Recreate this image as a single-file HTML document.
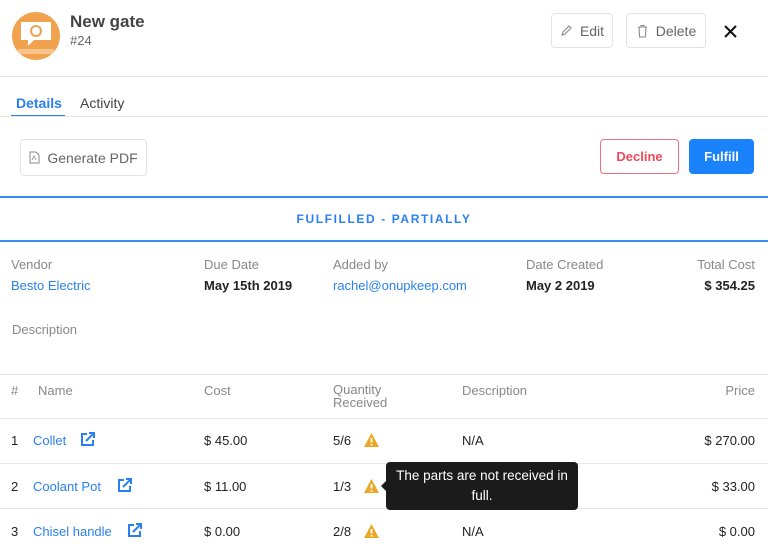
<!DOCTYPE html>
<html><head><meta charset="utf-8"><style>
*{margin:0;padding:0;box-sizing:border-box}
body{width:768px;height:550px;overflow:hidden;background:#fff;font-family:"Liberation Sans",sans-serif;position:relative;color:#222}
.a{position:absolute;white-space:nowrap}
.btn{position:absolute;border:1px solid #e3e3e3;border-radius:4px;background:#fff;color:#666;font-size:14px;display:flex;align-items:center;justify-content:center;gap:7px}
.hl{position:absolute;left:0;width:768px;height:1px;background:#e6e6e6}
.lbl{font-size:13px;color:#888}
.val{font-size:13px;color:#222}
.blue{color:#2a80f0}
.warn{position:absolute;width:17px;height:16px}
</style></head><body>
<div class="a" style="left:12px;top:12px;width:48px;height:48px;border-radius:50%;background:#f0a24e;overflow:hidden">
<svg width="48" height="48" viewBox="0 0 48 48"><path d="M9 10h30v18H22l-6 6v-6H9z" fill="#fff"/><circle cx="24" cy="19" r="5" fill="none" stroke="#f0a24e" stroke-width="2"/><rect x="6" y="37" width="36" height="5" fill="#f6c48c"/></svg></div>
<div class="a" style="left:70px;top:12px;font-size:17px;font-weight:bold;color:#444">New gate</div>
<div class="a" style="left:70px;top:33px;font-size:13px;color:#666">#24</div>
<div class="btn" style="left:551px;top:13px;width:62px;height:35px"><svg width="13" height="13" viewBox="0 0 13 13"><path d="M2 11l1-3 6-6 2 2-6 6z" fill="none" stroke="#888" stroke-width="1.1"/></svg>Edit</div>
<div class="btn" style="left:626px;top:13px;width:80px;height:35px"><svg width="13" height="14" viewBox="0 0 13 14"><path d="M2 3h9M5 3V1.5h3V3M3 3l.6 10h5.8L10 3" fill="none" stroke="#888" stroke-width="1.1"/></svg>Delete</div>
<svg class="a" style="left:724px;top:25px" width="13" height="13" viewBox="0 0 13 13"><path d="M1 1l11 11M12 1L1 12" stroke="#111" stroke-width="2"/></svg>
<div class="hl" style="top:76px"></div>
<div class="a blue" style="left:16px;top:95px;font-size:14px;font-weight:bold">Details</div>
<div class="a" style="left:80px;top:95px;font-size:14px;color:#444">Activity</div>
<div class="a" style="left:11px;top:115px;width:54px;height:2px;background:#2a80f0"></div>
<div class="hl" style="top:116px"></div>
<div class="btn" style="left:20px;top:139px;width:127px;height:37px"><svg width="11" height="13" viewBox="0 0 11 13"><path d="M1 1h6l3 3v8H1z" fill="none" stroke="#888"/><path d="M3 9l2-4 2 4" fill="none" stroke="#888" stroke-width=".8"/></svg>Generate PDF</div>
<div class="btn" style="left:600px;top:139px;width:79px;height:35px;border-color:#f07080;color:#f04858;font-weight:bold;font-size:13px">Decline</div>
<div class="btn" style="left:689px;top:139px;width:65px;height:35px;border-color:#1a82fb;background:#1a82fb;color:#fff;font-weight:bold;font-size:13px">Fulfill</div>
<div class="a" style="left:0;top:196px;width:768px;height:2px;background:#3a8af0"></div>
<div class="a" style="left:0;top:212px;width:768px;text-align:center;font-size:12px;font-weight:bold;letter-spacing:1.6px;color:#2a80f0">FULFILLED - PARTIALLY</div>
<div class="a" style="left:0;top:240px;width:768px;height:2px;background:#3a8af0"></div>
<div class="a lbl" style="left:11px;top:257px">Vendor</div>
<div class="a lbl" style="left:204px;top:257px">Due Date</div>
<div class="a lbl" style="left:333px;top:257px">Added by</div>
<div class="a lbl" style="left:526px;top:257px">Date Created</div>
<div class="a lbl" style="right:13px;top:257px">Total Cost</div>
<div class="a val blue" style="left:11px;top:278px">Besto Electric</div>
<div class="a val" style="left:204px;top:278px;font-weight:bold;color:#222">May 15th 2019</div>
<div class="a val blue" style="left:333px;top:278px">rachel@onupkeep.com</div>
<div class="a val" style="left:526px;top:278px;font-weight:bold">May 2 2019</div>
<div class="a val" style="right:13px;top:278px;font-weight:bold">$ 354.25</div>
<div class="a lbl" style="left:12px;top:322px">Description</div>
<div class="hl" style="top:374px"></div>
<div class="a lbl" style="left:11px;top:383px">#</div>
<div class="a lbl" style="left:38px;top:383px">Name</div>
<div class="a lbl" style="left:204px;top:383px">Cost</div>
<div class="a lbl" style="left:333px;top:383px;line-height:13px">Quantity<br>Received</div>
<div class="a lbl" style="left:462px;top:383px">Description</div>
<div class="a lbl" style="right:13px;top:383px">Price</div>
<div class="hl" style="top:418px"></div>
<div class="hl" style="top:463px"></div>
<div class="hl" style="top:508px"></div>
<div class="a val" style="left:11px;top:433px">1</div>
<div class="a val blue" style="left:33px;top:433px">Collet</div>
<div class="a val" style="left:204px;top:433px">$ 45.00</div>
<div class="a val" style="left:333px;top:433px">5/6</div>
<div class="a val" style="left:462px;top:433px">N/A</div>
<div class="a val" style="right:13px;top:433px">$ 270.00</div>
<div class="a val" style="left:11px;top:479px">2</div>
<div class="a val blue" style="left:33px;top:479px">Coolant Pot</div>
<div class="a val" style="left:204px;top:479px">$ 11.00</div>
<div class="a val" style="left:333px;top:479px">1/3</div>
<div class="a val" style="right:13px;top:479px">$ 33.00</div>
<div class="a val" style="left:11px;top:524px">3</div>
<div class="a val blue" style="left:33px;top:524px">Chisel handle</div>
<div class="a val" style="left:204px;top:524px">$ 0.00</div>
<div class="a val" style="left:333px;top:524px">2/8</div>
<div class="a val" style="left:462px;top:524px">N/A</div>
<div class="a val" style="right:13px;top:524px">$ 0.00</div>
<svg class="a" style="left:80px;top:432px" width="15" height="15" viewBox="0 0 15 15"><path d="M7 2H2v11h11V8" fill="none" stroke="#2a80f0" stroke-width="2"/><path d="M6 9l7-7M9 1h5v5" fill="none" stroke="#2a80f0" stroke-width="2"/></svg>
<svg class="a" style="left:117px;top:478px" width="15" height="15" viewBox="0 0 15 15"><path d="M7 2H2v11h11V8" fill="none" stroke="#2a80f0" stroke-width="2"/><path d="M6 9l7-7M9 1h5v5" fill="none" stroke="#2a80f0" stroke-width="2"/></svg>
<svg class="a" style="left:127px;top:523px" width="15" height="15" viewBox="0 0 15 15"><path d="M7 2H2v11h11V8" fill="none" stroke="#2a80f0" stroke-width="2"/><path d="M6 9l7-7M9 1h5v5" fill="none" stroke="#2a80f0" stroke-width="2"/></svg>
<svg class="warn" style="left:363px;top:432px" viewBox="0 0 17 16"><path d="M8.5 1L16 15H1z" fill="#e9a825"/><path d="M8.5 6v4.5M8.5 12v1.5" stroke="#fff" stroke-width="1.8"/></svg>
<svg class="warn" style="left:363px;top:478px" viewBox="0 0 17 16"><path d="M8.5 1L16 15H1z" fill="#e9a825"/><path d="M8.5 6v4.5M8.5 12v1.5" stroke="#fff" stroke-width="1.8"/></svg>
<svg class="warn" style="left:363px;top:523px" viewBox="0 0 17 16"><path d="M8.5 1L16 15H1z" fill="#e9a825"/><path d="M8.5 6v4.5M8.5 12v1.5" stroke="#fff" stroke-width="1.8"/></svg>
<div class="a" style="left:386px;top:462px;width:192px;height:48px;background:#1b1b1b;border-radius:4px;color:#fff;font-size:13.5px;text-align:center;line-height:20px;padding:4px 8px 0;white-space:normal">The parts are not received in full.</div>
<div class="a" style="left:381px;top:481px;width:0;height:0;border-top:5px solid transparent;border-bottom:5px solid transparent;border-right:5px solid #1b1b1b"></div>
</body></html>
